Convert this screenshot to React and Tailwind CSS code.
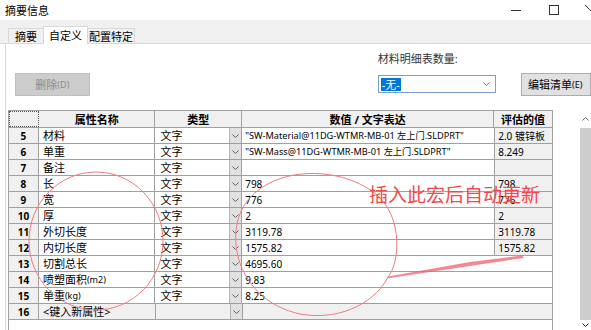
import React from "react";

const rows = [
  { n: 5, name: "材料", type: "文字", value: '"SW-Material@11DG-WTMR-MB-01 左上门.SLDPRT"', long: true, evalv: "2.0 镀锌板" },
  { n: 6, name: "单重", type: "文字", value: '"SW-Mass@11DG-WTMR-MB-01 左上门.SLDPRT"', long: true, evalv: "8.249" },
  { n: 7, name: "备注", type: "文字", value: "", evalv: "" },
  { n: 8, name: "长", type: "文字", value: "798", evalv: "798" },
  { n: 9, name: "宽", type: "文字", value: "776", evalv: "776" },
  { n: 10, name: "厚", type: "文字", value: "2", evalv: "2" },
  { n: 11, name: "外切长度", type: "文字", value: "3119.78", evalv: "3119.78" },
  { n: 12, name: "内切长度", type: "文字", value: "1575.82", evalv: "1575.82" },
  { n: 13, name: "切割总长", type: "文字", value: "4695.60", evalv: null },
  { n: 14, name: "喷塑面积", unit: "(m2)", type: "文字", value: "9.83", evalv: null },
  { n: 15, name: "单重", unit: "(kg)", type: "文字", value: "8.25", evalv: null },
];

function Chevron({ className = "" }) {
  return (
    <svg width="7" height="4" viewBox="0 0 7 4" className={className}>
      <polyline points="0.5,0.5 3.5,3.5 6.5,0.5" fill="none" stroke="currentColor" strokeWidth="1" />
    </svg>
  );
}

function DropBtn() {
  return (
    <div className="ml-auto w-[12px] h-[15px] bg-[#e1e1e1] border-l border-[#b5b5b5] flex items-center justify-center text-[#606060]">
      <Chevron />
    </div>
  );
}

function Row({ r }) {
  return (
    <div className="flex h-[16px] border-b border-[#a0a0a0]">
      <div className="w-[30px] bg-[#f0f0f0] border-r border-[#a0a0a0] flex items-center justify-center font-bold text-[10px]">
        {r.n}
      </div>
      <div className="w-[117px] border-r border-[#a0a0a0] flex items-center pl-[4px]">
        {r.name}
        {r.unit && <span className="text-[9px]">{r.unit}</span>}
      </div>
      <div className="w-[87px] border-r border-[#a0a0a0] flex items-center pl-[5px]">
        <span>{r.type}</span>
        <DropBtn />
      </div>
      <div
        className={
          r.long
            ? "w-[253px] flex items-center pl-[3px] text-[9.2px] whitespace-nowrap overflow-hidden"
            : "w-[253px] flex items-center pl-[3px] text-[10px] whitespace-nowrap overflow-hidden"
        }
      >
        {r.value}
      </div>
      {r.evalv !== null ? (
        <div className="w-[58px] bg-[#f0f0f0] border-l border-[#a0a0a0] flex items-center pl-[3px] text-[10px] whitespace-nowrap">
          {r.evalv}
        </div>
      ) : (
        <div className="w-[58px]" />
      )}
    </div>
  );
}

export default function App() {
  return (
    <div className="relative w-[591px] h-[330px] overflow-hidden bg-white text-black font-['Noto_Sans','Noto_Sans_CJK_SC',sans-serif] text-[11px] leading-none">
      {/* 标题栏 */}
      <div className="h-[20px] flex items-center pl-[5px]">
        <span>摘要信息</span>
        <div className="ml-auto flex items-center">
          <svg width="10" height="10" viewBox="0 0 10 10" className="mr-[28px]">
            <line x1="0" y1="5.5" x2="10" y2="5.5" stroke="#333" strokeWidth="1" />
          </svg>
          <svg width="10" height="10" viewBox="0 0 10 10" className="mr-[26px]">
            <rect x="0.5" y="0.5" width="9" height="9" fill="none" stroke="#333" strokeWidth="1" />
          </svg>
          <svg width="6" height="10" viewBox="0 0 6 10">
            <line x1="0" y1="0" x2="10" y2="10" stroke="#333" strokeWidth="1" />
          </svg>
        </div>
      </div>

      {/* 选项卡 */}
      <div className="h-[24px] bg-[#f0f0f0] flex items-end pl-[8px] border-b border-[#d9d9d9]">
        <div className="w-[35px] h-[15px] flex items-center justify-center border-t border-l border-[#d9d9d9] bg-[#f0f0f0]">
          摘要
        </div>
        <div className="w-[45px] h-[18px] mb-[-1px] flex items-center justify-center border border-b-0 border-[#d9d9d9] bg-white">
          自定义
        </div>
        <div className="w-[47px] h-[15px] flex items-center justify-center border-t border-r border-[#d9d9d9]">
          配置特定
        </div>
      </div>

      {/* 内容 */}
      <div className="ml-[5px] h-[286px] border-l border-[#d9d9d9] bg-white">
        <div className="h-[66px] flex">
          <div className="ml-[9px] mt-[29px] w-[77px] h-[23px] bg-[#cccccc] border border-[#bfbfbf] text-[#8a8a8a] flex items-center justify-center">
            删除<span className="text-[9px]">(D)</span>
          </div>
          <div className="ml-[288px] mt-[9px] w-[122px] flex flex-col">
            <span className="h-[12px] text-[#333]">材料明细表数量:</span>
            <div className="mt-[10px] h-[18px] border border-[#7a9ccf] flex items-center pl-[2px] pr-[5px]">
              <span className="bg-[#0078d7] text-white px-[1px] h-[13px] flex items-center">-无-</span>
              <Chevron className="ml-auto text-[#777]" />
            </div>
          </div>
          <div className="ml-[25px] mt-[29px] w-[70px] h-[23px] shrink-0 bg-[#e1e1e1] border border-[#adadad] flex items-center pl-[6px]">
            编辑清单<span className="text-[9px]">(E)</span>
          </div>
        </div>

        <div className="flex">
          {/* 表格 */}
          <div className="ml-[2px] w-[545px] border-t border-l border-r border-[#a0a0a0]">
            <div className="flex h-[17px] border-b border-[#a0a0a0] bg-[#f0f0f0] font-bold">
              <div className="w-[30px] border border-dotted border-[#555]" />
              <div className="w-[117px] border-r border-[#a0a0a0] flex items-center justify-center">属性名称</div>
              <div className="w-[87px] border-r border-[#a0a0a0] flex items-center justify-center">类型</div>
              <div className="w-[253px] border-r border-[#a0a0a0] flex items-center justify-center">数值 / 文字表达</div>
              <div className="w-[58px] flex items-center justify-center">评估的值</div>
            </div>
            {rows.map((r) => (
              <Row key={r.n} r={r} />
            ))}
            <div className="flex h-[16px] border-b border-[#a0a0a0] bg-[#f0f0f0]">
              <div className="w-[30px] border-r border-[#a0a0a0] flex items-center justify-center font-bold text-[10px]">16</div>
              <div className="w-[117px] border-r border-[#a0a0a0] flex items-center pl-[4px]">&lt;键入新属性&gt;</div>
              <div className="w-[87px] border-r border-[#a0a0a0] flex items-center">
                <DropBtn />
              </div>
              <div className="flex-1" />
            </div>
          </div>

          {/* 滚动条 */}
          <div className="ml-auto w-[11px] h-[220px] flex flex-col items-center">
            <div className="h-[18px] flex items-center text-[#606060]">
              <Chevron className="rotate-180" />
            </div>
            <div className="w-full flex-1 bg-[#cdcdcd]" />
            <div className="h-[10px] flex items-center text-[#222]">
              <Chevron />
            </div>
          </div>
        </div>
      </div>

      {/* 红色标注 */}
      <svg className="absolute left-0 top-0 pointer-events-none" width="591" height="330" viewBox="0 0 591 330">
        <ellipse cx="96" cy="241" rx="67" ry="69" fill="none" stroke="#f27b7b" strokeWidth="1" />
        <path d="M388 277 C 400 262, 402 220, 380 198 C 350 168, 280 162, 248 200 C 222 232, 236 300, 300 314 C 345 322, 378 298, 388 277" fill="none" stroke="#f27b7b" strokeWidth="1" />
        <polygon points="388,276.5 470,262 522,255.5 524,258 470,266 388,278.2" fill="#f0606e" opacity="0.75" />
      </svg>
      <div className="absolute left-[369px] top-[186px] text-[19px] leading-none text-[#f04a4a] whitespace-nowrap">
        插入此宏后自动更新
      </div>
    </div>
  );
}
